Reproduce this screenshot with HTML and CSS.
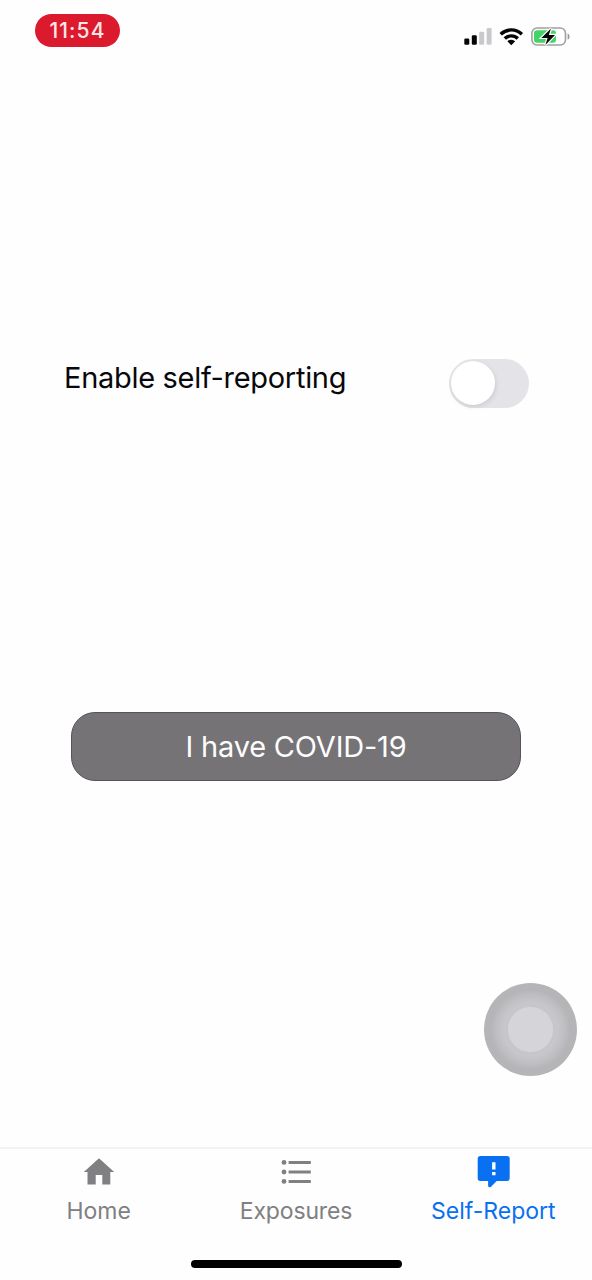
FILE: index.html
```html
<!DOCTYPE html>
<html lang="en">
<head>
<meta charset="utf-8">
<title>Self-Report</title>
<link rel="stylesheet" href="styles.css">
</head>
<body>
<div class="screen">
  <header class="status">
    <div class="clock"><span>11:54</span></div>
    <svg class="status-icons" width="108" height="22" viewBox="463 25 108 22">
      <rect x="464.3" y="38.5" width="5" height="6.3" rx="1.2" fill="#050507"/>
      <rect x="471.8" y="35.3" width="5" height="9.5" rx="1.2" fill="#050507"/>
      <rect x="479.2" y="31.7" width="5" height="13.1" rx="1.2" fill="#c9c9cb"/>
      <rect x="486.6" y="28" width="5" height="16.8" rx="1.2" fill="#c9c9cb"/>
      <g fill="none" stroke="#050507" stroke-width="3.4">
        <path d="M500.7 34.2a15.2 15.2 0 0 1 21.2 0"/>
        <path d="M504.8 38.5a9.3 9.3 0 0 1 13 0"/>
      </g>
      <path d="M507.4 41.3a5.6 5.6 0 0 1 7.8 0l-3.9 4z" fill="#050507"/>
      <rect x="531.9" y="28" width="33.6" height="17" rx="5.2" fill="#fff" stroke="#a0a0a2" stroke-width="1.6"/>
      <rect x="534" y="30.2" width="22" height="12.6" rx="3" fill="#43d366"/>
      <path d="M567.6 33.4c2.6 1 2.6 5.2 0 6.2z" fill="#98989a"/>
      <path d="M551 28.6l-9.600 9.300h6.200l-2.200 7 9.600-9.900h-6.200z" fill="#050507" stroke="#fff" stroke-width="2.400" paint-order="stroke"/>
    </svg>
  </header>

  <main class="content">
    <div class="setting">
      <span class="setting-label">Enable self-reporting</span>
      <span class="switch"><span class="knob"></span></span>
    </div>
    <button class="report">I have COVID-19</button>
  </main>

  <nav class="tabs">
    <div class="tab">
      <svg width="36" height="36" viewBox="0 0 36 36"><path d="M18 4.200L2.800 18H6.500V30.500H14.700V21H21.300V30.500H29.300V18H33.200z" fill="#808082"/></svg>
      <span class="tab-label home">Home</span>
    </div>
    <div class="tab">
      <svg width="36" height="36" viewBox="0 0 36 36" fill="#808082"><circle cx="6" cy="8.400" r="2.400"/><circle cx="6" cy="18" r="2.400"/><circle cx="6" cy="27.400" r="2.400"/><path d="M10.600 6.900h22.200v3H10.600zM10.600 16.500h22.200v3H10.600zM10.600 25.900h22.200v3H10.600z"/></svg>
      <span class="tab-label exposures">Exposures</span>
    </div>
    <div class="tab active">
      <svg width="36" height="36" viewBox="-0.700 0 36 36"><path d="M4.700 2H31.300Q34 2 34 4.700V24.300Q34 27 31.300 27H21L15.300 32.700Q12.800 34.200 12.400 31.700V27H4.700Q2 27 2 24.300V4.700Q2 2 4.700 2z" fill="#0a70f2"/><path d="M16.400 8.200h3.400v7.400h-3.400zM16.400 17.900h3.400v3.300h-3.400z" fill="#fff"/></svg>
      <span class="tab-label self-report">Self-Report</span>
    </div>
  </nav>
  <div class="home-bar"></div>
  <div class="assistive"></div>
</div>
</body>
</html>
```
FILE: styles.css
```css
* { box-sizing: border-box; }
body { margin: 0; background: #fff; font-family: Inter, "Liberation Sans", sans-serif; color: #08080a; }
.screen { position: relative; width: 592px; height: 1280px; display: flex; flex-direction: column; background: #fefefe; overflow: hidden; }
.status { height: 60px; padding: 14px 21px 0 35px; display: flex; justify-content: space-between; align-items: flex-start; }
.clock { width: 85px; height: 33px; border-radius: 17px; background: #dc1a2d; color: #fce6e8; display: flex; align-items: center; justify-content: center; font-size: 21px; line-height: 33px; font-weight: 500; letter-spacing: 1.1px; }
.status-icons { margin-top: 11px; }
.content { flex: 1; display: flex; flex-direction: column; padding: 299px 63px 0 64px; }
.setting { display: flex; justify-content: space-between; align-items: flex-start; height: 353px; }
.setting-label { font-size: 29px; line-height: 38px; letter-spacing: -0.3px; white-space: nowrap; }
.switch { width: 80px; height: 49px; padding: 2px; border-radius: 25px; background: #e4e3e8; }
.knob { display: block; width: 44px; height: 44px; border-radius: 50%; background: #fff; box-shadow: 1px 2px 5px rgba(0,0,0,.1); }
.report { width: 450px; height: 69px; margin-left: 7px; padding: 0; border: 1.5px solid #56545a; border-radius: 24px; background: #757376; color: #fdfdfd; font: 400 29px/66px Inter, sans-serif; letter-spacing: -0.2px; }
.tabs { height: 113px; border-top: 2px solid #f2f2f3; display: grid; grid-template-columns: repeat(3, 197.33px); padding-top: 5px; }
.tab { display: flex; flex-direction: column; align-items: center; color: #808082; }
.tab-label { font-size: 23px; line-height: 30px; margin-top: 6px; white-space: nowrap; }
.exposures { letter-spacing: -0.15px; }
.active { color: #0a70f2; }
.home-bar { width: 211px; height: 8px; margin: 0 0 12px 191px; border-radius: 4px; background: #000; }
.assistive { position: absolute; left: 484px; top: 983px; width: 93px; height: 93px; border-radius: 50%; background: radial-gradient(circle at center, #d5d4d8 0 22px, #c7c6ca 23px 27px, #bfbec2 34px, #b5b5b8 40px); }
```
